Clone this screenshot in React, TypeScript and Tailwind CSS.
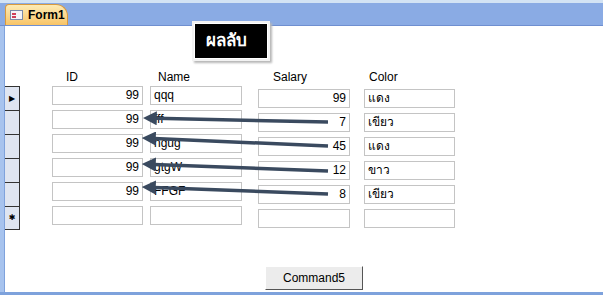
const ids = ["99", "99", "99", "99", "99", ""]
const names = ["qqq", "fff", "ngug", "gtgW", "FFGF", ""]
const salaries = ["99", "7", "45", "12", "8", ""]
const colors = ["แดง", "เขียว", "แดง", "ขาว", "เขียว", ""]

const Box = ({ value, right }: { value: string; right?: boolean }) => (
	<div className={`h-[19px] border border-[#c4c4c4] px-[3px] text-[12px] leading-[17px] text-black ${right ? "text-right" : "text-left"}`}>
		{value}
	</div>
)

const Arrows = () => {
	const lines = [
		[328, 122, 143, 118],
		[328, 146, 142, 138],
		[328, 171, 142, 164],
		[328, 194, 142, 187],
	]
	return (
		<svg className="absolute left-0 top-0 pointer-events-none" width="603" height="295">
			<defs>
				<marker id="head" markerWidth="4" markerHeight="4" refX="0.5" refY="2" orient="auto" markerUnits="strokeWidth">
					<path d="M0,0 L4,2 L0,4 Z" fill="#3a4a5f" />
				</marker>
			</defs>
			{lines.map(([x1, y1, x2, y2], i) => (
				<line key={i} x1={x1} y1={y1} x2={x2 + 12} y2={y2 + (y1 - y2) * 12 / (x1 - x2)} stroke="#3a4a5f" strokeWidth="3.5" markerEnd="url(#head)" />
			))}
		</svg>
	)
}

export default function App() {
	return (
		<div className="relative w-[603px] h-[295px] bg-white overflow-hidden" style={{ fontFamily: '"Liberation Sans", "Noto Sans", "DejaVu Sans", sans-serif' }}>
			<div className="h-[3px] bg-[#d3e3f4]" />
			<div className="h-[23px] bg-[#8aabe4] border-b border-[#6f8fd0] flex items-end pl-[5px]">
				<div className="h-[21px] w-[63px] rounded-tl-[4px] rounded-tr-[12px] border border-b-0 border-[#d99a3e] bg-gradient-to-b from-[#fdebb4] to-[#f8c466] flex items-center gap-[5px] pl-[4px]">
					<div className="w-[13px] h-[10px] bg-[#f4f4f8] border border-[#7b8aa8] flex flex-col justify-center gap-[1px] px-[1px]">
						<div className="h-[2px] w-[4px] bg-[#d0405a]" />
						<div className="h-[2px] w-[4px] bg-[#d0405a]" />
					</div>
					<span className="text-[12px] font-bold text-black">Form1</span>
				</div>
			</div>
			<div className="flex h-[266px]">
				<div className="w-[5px] bg-[#a7c3ee] border-r border-[#7fa2dc]" />
				<div className="flex-1 flex flex-col">
					<div className="-mt-[5px] ml-[187px] w-[78px] h-[40px] bg-white border-[2px] border-[#f2f2f2] shadow-[2px_2px_2px_#b8b8b8] p-[1px]">
						<div className="h-full bg-black flex items-center pl-[11px] text-white text-[17px] font-bold">ผลลับ</div>
					</div>
					<div className="flex mt-[9px]">
						<div className="w-[15px] pt-[16px] flex flex-col">
							{[0, 1, 2, 3, 4, 5].map((i) => (
								<div key={i} className={`h-[24px] bg-[#dfe5f1] border-r border-t border-[#333] ${i === 5 ? "border-b" : ""} flex items-center justify-center text-[8px] text-black`}>
									{i === 0 ? "▶" : i === 5 ? "✱" : ""}
								</div>
							))}
						</div>
						<div className="ml-[32px] w-[91px] flex flex-col">
							<div className="h-[16px] text-[12px] leading-[14px] pl-[14px] text-black">ID</div>
							<div className="flex flex-col gap-[5px]">
								{ids.map((v, i) => <Box key={i} value={v} right />)}
							</div>
						</div>
						<div className="ml-[7px] w-[92px] flex flex-col">
							<div className="h-[16px] text-[12px] leading-[14px] pl-[8px] text-black">Name</div>
							<div className="flex flex-col gap-[5px]">
								{names.map((v, i) => <Box key={i} value={v} />)}
							</div>
						</div>
						<div className="ml-[16px] w-[92px] flex flex-col">
							<div className="h-[16px] text-[12px] leading-[14px] pl-[15px] text-black">Salary</div>
							<div className="mt-[3px] flex flex-col gap-[5px]">
								{salaries.map((v, i) => <Box key={i} value={v} right />)}
							</div>
						</div>
						<div className="ml-[14px] w-[91px] flex flex-col">
							<div className="h-[16px] text-[12px] leading-[14px] pl-[5px] text-black">Color</div>
							<div className="mt-[3px] flex flex-col gap-[5px]">
								{colors.map((v, i) => <Box key={i} value={v} />)}
							</div>
						</div>
					</div>
					<div className="mt-[36px] ml-[260px] w-[98px] h-[24px] bg-[#ececec] border border-t-white border-l-white border-r-[#555] border-b-[#555] flex items-center justify-center text-[12px] text-black">
						Command5
					</div>
				</div>
			</div>
			<div className="h-[3px] bg-[#7ea2dc]" />
			<Arrows />
		</div>
	)
}
